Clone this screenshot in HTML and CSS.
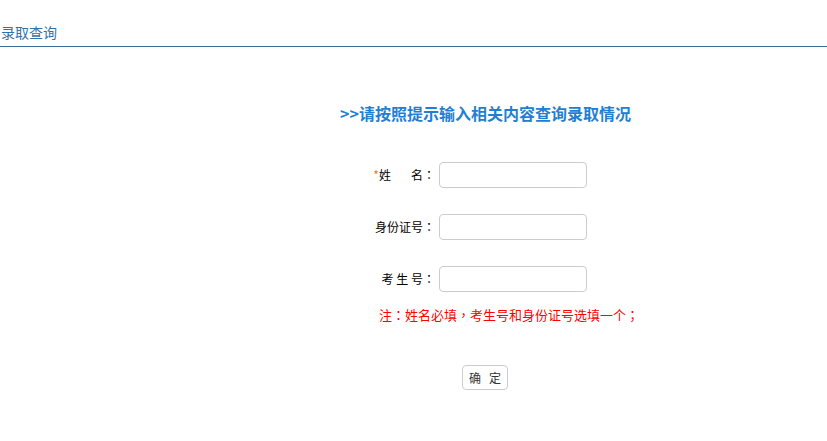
FILE: index.html
```html
<html>
<head>
    <title>录取查询</title>
    <link rel="stylesheet" href="styles.css">
</head>
<body>
    <div class="top-bar">录取查询</div>

    <div class="main">
        <h2 class="tip">&gt;&gt;请按照提示输入相关内容查询录取情况</h2>

        <form class="query-form" onsubmit="return false;">
            <label class="label" for="xm"><span class="star">*</span>姓<span class="gap"></span>名<span class="punct">：</span></label>
            <input class="field" type="text" id="xm">

            <label class="label" for="sfzh">身份证号<span class="punct">：</span></label>
            <input class="field" type="text" id="sfzh">

            <label class="label" for="ksh">考 生 号<span class="punct">：</span></label>
            <input class="field" type="text" id="ksh">
        </form>

        <p class="note">注<span class="punct">：</span>姓名必填<span class="punct">，</span>考生号和身份证号选填一个<span class="punct">；</span></p>

        <div class="actions">
            <button class="btn" type="button">确<span class="gap-s"></span>定</button>
        </div>
    </div>
</body>
</html>
```

FILE: styles.css
```css
body {
    margin: 0;
    font-family: "Noto Sans CJK SC", "Liberation Sans", sans-serif;
    background-color: #fff;
    color: #000;
}
.top-bar {
    font-size: 14px;
    line-height: 20px;
    color: #3372a8;
    padding: 22px 0 4px 1px;
    border-bottom: 1px solid #3a6d9a;
}
.main {
    padding-top: 54px;
}
.tip {
    margin: 0 0 37px 340px;
    font-size: 16px;
    line-height: 24px;
    font-weight: bold;
    color: #1f80d3;
}
.query-form {
    margin: 0 0 0 335px;
    display: grid;
    grid-template-columns: 100px 148px;
    column-gap: 4px;
    row-gap: 26px;
    align-items: center;
}
.label {
    font-size: 12px;
    line-height: 26px;
    text-align: right;
    white-space: nowrap;
}
/* centred full-width punctuation */
.punct {
    font-family: "Noto Sans CJK TC", "Noto Sans CJK SC", sans-serif;
}
.star {
    color: #f07a1c;
}
.gap {
    display: inline-block;
    width: 20px;
}
.gap-s {
    display: inline-block;
    width: 8px;
}
.field {
    box-sizing: border-box;
    width: 148px;
    height: 26px;
    border: 1px solid #ccc;
    border-radius: 4px;
    padding: 2px 6px;
    font-size: 12px;
    outline: none;
}
.note {
    margin: 14px 0 0 379px;
    font-size: 13px;
    line-height: 18px;
    color: #f00;
}
.actions {
    margin: 41px 0 0 462px;
}
.btn {
    box-sizing: border-box;
    width: 46px;
    height: 25px;
    padding: 0;
    font-family: "Noto Sans CJK SC", sans-serif;
    font-size: 12px;
    color: #333;
    background-color: #fff;
    border: 1px solid #ccc;
    border-radius: 4px;
    cursor: pointer;
}
```
